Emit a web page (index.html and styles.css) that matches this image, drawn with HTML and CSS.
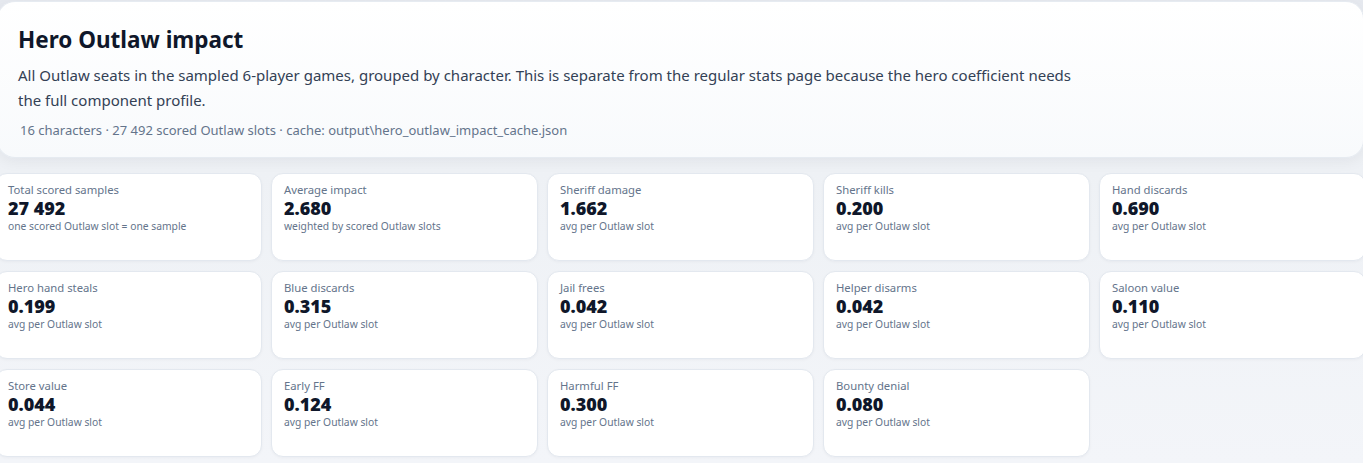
FILE: index.html
```html
<!doctype html>
<html lang="en">
<head>
    <meta charset="utf-8">
    <meta name="viewport" content="width=device-width, initial-scale=1">
    <title>Hero Outlaw impact</title>
    <link rel="stylesheet" href="styles.css">
</head>
<body>

<main class="page">
    <!-- Page header -->
    <header class="hero-card">
        <h1 class="hero-title">Hero Outlaw impact</h1>
        <p class="hero-text">All Outlaw seats in the sampled 6-player games, grouped by character. This is separate from the regular stats page because the hero coefficient needs the full component profile.</p>
        <div class="hero-meta">16 characters · 27 492 scored Outlaw slots · cache: output\hero_outlaw_impact_cache.json</div>
    </header>

    <!-- Summary stats -->
    <section class="stat-grid">
        <div class="stat-card">
            <div class="stat-label">Total scored samples</div>
            <div class="stat-value">27 492</div>
            <div class="stat-note">one scored Outlaw slot = one sample</div>
        </div>
        <div class="stat-card">
            <div class="stat-label">Average impact</div>
            <div class="stat-value">2.680</div>
            <div class="stat-note">weighted by scored Outlaw slots</div>
        </div>
        <div class="stat-card">
            <div class="stat-label">Sheriff damage</div>
            <div class="stat-value">1.662</div>
            <div class="stat-note">avg per Outlaw slot</div>
        </div>
        <div class="stat-card">
            <div class="stat-label">Sheriff kills</div>
            <div class="stat-value">0.200</div>
            <div class="stat-note">avg per Outlaw slot</div>
        </div>
        <div class="stat-card">
            <div class="stat-label">Hand discards</div>
            <div class="stat-value">0.690</div>
            <div class="stat-note">avg per Outlaw slot</div>
        </div>

        <div class="stat-card">
            <div class="stat-label">Hero hand steals</div>
            <div class="stat-value">0.199</div>
            <div class="stat-note">avg per Outlaw slot</div>
        </div>
        <div class="stat-card">
            <div class="stat-label">Blue discards</div>
            <div class="stat-value">0.315</div>
            <div class="stat-note">avg per Outlaw slot</div>
        </div>
        <div class="stat-card">
            <div class="stat-label">Jail frees</div>
            <div class="stat-value">0.042</div>
            <div class="stat-note">avg per Outlaw slot</div>
        </div>
        <div class="stat-card">
            <div class="stat-label">Helper disarms</div>
            <div class="stat-value">0.042</div>
            <div class="stat-note">avg per Outlaw slot</div>
        </div>
        <div class="stat-card">
            <div class="stat-label">Saloon value</div>
            <div class="stat-value">0.110</div>
            <div class="stat-note">avg per Outlaw slot</div>
        </div>

        <div class="stat-card">
            <div class="stat-label">Store value</div>
            <div class="stat-value">0.044</div>
            <div class="stat-note">avg per Outlaw slot</div>
        </div>
        <div class="stat-card">
            <div class="stat-label">Early FF</div>
            <div class="stat-value">0.124</div>
            <div class="stat-note">avg per Outlaw slot</div>
        </div>
        <div class="stat-card">
            <div class="stat-label">Harmful FF</div>
            <div class="stat-value">0.300</div>
            <div class="stat-note">avg per Outlaw slot</div>
        </div>
        <div class="stat-card">
            <div class="stat-label">Bounty denial</div>
            <div class="stat-value">0.080</div>
            <div class="stat-note">avg per Outlaw slot</div>
        </div>
    </section>
</main>

</body>
</html>
```

FILE: styles.css
```css
/* Page colors */
:root {
    --page-bg: #f1f4f8;
    --card-bg: #fff;
    --card-border: #e3e8ef;
    --text-main: #0f172a;
    --text-body: #334155;
    --text-muted: #64748b;
}

html,
body {
    margin: 0;
    overflow: hidden;
}

body {
    font-family: "Noto Sans", "Open Sans", Arial, sans-serif;
    color: var(--text-main);
    background: linear-gradient(180deg, #e6e9ef 0, #eef1f5 170px, #f3f5f9 100%);
    min-height: 463px;
}

/* The content runs a few pixels past both window edges */
.page {
    width: 1371px;
    margin-left: -5px;
    padding-top: 1px;
}

/* Header card */
.hero-card {
    margin: 0 2px 15px;
    padding: 23px 20px 18px 20px;
    border: 1px solid #e6ebf1;
    border-radius: 18px;
    background: linear-gradient(180deg, #fff 0%, #f8fafc 100%);
    box-shadow: 0 4px 14px rgba(15, 23, 42, 0.05);
}

.hero-title {
    margin: 0 0 8px;
    font-size: 22.5px;
    line-height: 30px;
    font-weight: 700;
    color: var(--text-main);
}

.hero-text {
    margin: 0;
    max-width: 1062px;
    font-size: 15px;
    line-height: 25px;
    color: var(--text-body);
}

.hero-meta {
    margin-top: 8px;
    padding-left: 2px;
    font-size: 13px;
    line-height: 18px;
    color: var(--text-muted);
}

/* Grid of stat cards */
.stat-grid {
    display: grid;
    grid-template-columns: repeat(5, 1fr);
    column-gap: 9px;
    row-gap: 10px;
}

.stat-card {
    height: 88px;
    box-sizing: border-box;
    padding: 8px 12px 0 12px;
    background: var(--card-bg);
    border: 1px solid var(--card-border);
    border-radius: 12px;
    box-shadow: 0 1px 3px rgba(15, 23, 42, 0.04);
}

.stat-label {
    font-size: 11.3px;
    line-height: 16px;
    color: var(--text-muted);
}

.stat-value {
    font-size: 18px;
    line-height: 21px;
    font-weight: 900;
    color: var(--text-main);
}

.stat-note {
    font-size: 10.3px;
    line-height: 15px;
    color: var(--text-muted);
}
```
